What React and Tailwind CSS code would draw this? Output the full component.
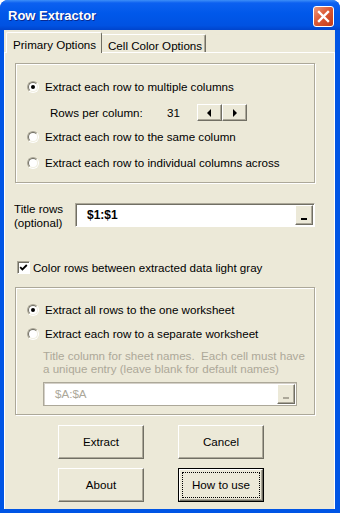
const font = "font-['Liberation_Sans',Arial,sans-serif]";

function Radio({ checked }) {
  return (
    <span className="flex w-[12px] h-[12px] shrink-0 rounded-full border border-t-[#ACA899] border-l-[#ACA899] border-b-white border-r-white">
      <span className="flex flex-1 items-center justify-center rounded-full border border-t-[#716F64] border-l-[#716F64] border-b-[#F1EFE2] border-r-[#F1EFE2] bg-white">
        {checked && <span className="w-[4px] h-[4px] rounded-full bg-black" />}
      </span>
    </span>
  );
}

function Check() {
  return (
    <span className="flex w-[13px] h-[13px] shrink-0 items-center justify-center border border-t-[#ACA899] border-l-[#ACA899] border-b-white border-r-white bg-white shadow-[inset_1px_1px_0_#716F64]">
      <svg width="9" height="9" viewBox="0 0 9 9">
        <path d="M1.2 4.2 L3.4 6.4 L7.8 2" fill="none" stroke="#000" strokeWidth="1.8" />
      </svg>
    </span>
  );
}

function Button({ children, focused }) {
  if (focused) {
    return (
      <div className="flex w-[86px] h-[34px] border border-black">
        <div className="flex flex-1 border border-t-white border-l-white border-b-[#716F64] border-r-[#716F64] shadow-[inset_-1px_-1px_0_#ACA899]">
          <div className="flex flex-1 m-[2px] items-center justify-center border border-dotted border-black text-black">
            {children}
          </div>
        </div>
      </div>
    );
  }
  return (
    <div className="flex w-[86px] h-[34px] items-center justify-center border border-t-white border-l-white border-b-[#716F64] border-r-[#716F64] shadow-[inset_-1px_-1px_0_#ACA899] text-black">
      {children}
    </div>
  );
}

function Spin({ dir }) {
  return (
    <div className="flex w-[25px] h-[17px] items-center justify-center border border-t-white border-l-white border-b-[#716F64] border-r-[#716F64] shadow-[inset_-1px_-1px_0_#ACA899]">
      <svg width="5" height="8" viewBox="0 0 5 8">
        {dir === 'left' ? <path d="M4 0 L0 4 L4 8 Z" fill="#000" /> : <path d="M1 0 L5 4 L1 8 Z" fill="#000" />}
      </svg>
    </div>
  );
}

function RefButton({ disabled }) {
  return (
    <div className="flex w-[18px] h-[20px] mr-[1px] items-end justify-center pb-[4px] border border-t-white border-l-white border-b-[#716F64] border-r-[#716F64] shadow-[inset_-1px_-1px_0_#ACA899] bg-[#ECE9D8]">
      <span className={disabled ? 'w-[6px] h-[2px] bg-[#ACA899]' : 'w-[6px] h-[2px] bg-black'} />
    </div>
  );
}

export default function App() {
  return (
    <div className={`${font} w-[340px] h-[513px] flex flex-col bg-[#0055E5] rounded-t-[8px] overflow-hidden text-[11.6px] text-black`}>
      {/* Title bar */}
      <div className="h-[30px] shrink-0 flex items-center justify-between pl-[8px] pr-[6px] bg-[linear-gradient(to_bottom,#3D8EF8_0%,#0C60F0_10%,#0058EA_45%,#0052E2_85%,#0044CC_100%)]">
        <span className="pt-[2px] text-[13px] font-bold text-white [text-shadow:1px_1px_0_#0A2A90]">Row Extractor</span>
        <div className="mt-[2px] flex w-[21px] h-[21px] items-center justify-center rounded-[3px] border border-white bg-[linear-gradient(135deg,#EC9A7C_0%,#DC5A36_45%,#C23A18_100%)]">
          <svg width="13" height="13" viewBox="0 0 13 13">
            <path d="M2 2 L11 11 M11 2 L2 11" stroke="#fff" strokeWidth="2.4" strokeLinecap="square" />
          </svg>
        </div>
      </div>

      {/* Client */}
      <div className="flex-1 flex flex-col ml-[4px] mr-[5px] mb-[4px] bg-[#ECE9D8]">
        {/* Tabs */}
        <div className="h-[22px] shrink-0 flex items-end pl-[2px]">
          <div className="relative z-10 -mb-[1px] flex w-[96px] h-[21px] items-start pt-[3px] pl-[6px] border-t border-l border-r border-t-white border-l-white border-r-[#716F64] rounded-t-[2px] bg-[#ECE9D8]">
            Primary Options
          </div>
          <div className="flex w-[104px] h-[18px] items-start pt-[2px] pl-[6px] border-t border-r border-t-white border-r-[#716F64] shadow-[inset_-1px_0_0_#ACA899] rounded-tr-[2px]">
            Cell Color Options
          </div>
        </div>

        {/* Panel */}
        <div className="flex-1 flex flex-col border-t border-l border-r border-white">
          {/* Group 1 */}
          <div className="mt-[10px] ml-[10px] w-[300px] flex flex-col pt-[15px] pb-[11px] pl-[11px] border border-[#ACA899] shadow-[inset_1px_1px_0_#fff,1px_1px_0_#fff]">
            <div className="h-[16px] flex items-center gap-[6px]">
              <Radio checked />
              <span>Extract each row to multiple columns</span>
            </div>
            <div className="mt-[9px] h-[17px] flex items-center pl-[23px]">
              <span className="w-[117px]">Rows per column:</span>
              <span className="w-[30px]">31</span>
              <Spin dir="left" />
              <Spin dir="right" />
            </div>
            <div className="mt-[8px] h-[16px] flex items-center gap-[6px]">
              <Radio />
              <span>Extract each row to the same column</span>
            </div>
            <div className="mt-[10px] h-[16px] flex items-center gap-[6px]">
              <Radio />
              <span>Extract each row to individual columns across</span>
            </div>
          </div>

          {/* Title rows */}
          <div className="mt-[20px] ml-[9px] h-[24px] flex items-start">
            <div className="w-[61px] -mt-[1px] leading-[14px]">
              <div>Title rows</div>
              <div>(optional)</div>
            </div>
            <div className="w-[240px] h-[24px] flex items-center justify-between bg-white border border-t-[#ACA899] border-l-[#ACA899] border-b-white border-r-white shadow-[inset_1px_1px_0_#716F64]">
              <span className="pl-[11px] text-[12px] font-bold">$1:$1</span>
              <RefButton />
            </div>
          </div>

          {/* Checkbox */}
          <div className="mt-[34px] ml-[12px] h-[13px] flex items-center gap-[3px]">
            <Check />
            <span>Color rows between extracted data light gray</span>
          </div>

          {/* Group 2 */}
          <div className="mt-[13px] ml-[10px] w-[300px] flex flex-col pt-[14px] pb-[8px] pl-[11px] border border-[#ACA899] shadow-[inset_1px_1px_0_#fff,1px_1px_0_#fff]">
            <div className="h-[16px] flex items-center gap-[6px]">
              <Radio checked />
              <span>Extract all rows to the one worksheet</span>
            </div>
            <div className="mt-[8px] h-[16px] flex items-center gap-[6px]">
              <Radio />
              <span>Extract each row to a separate worksheet</span>
            </div>
            <div className="mt-[7px] pl-[16px] leading-[13px] text-[#ACA899]">
              <div>Title column for sheet names.&nbsp; Each cell must have</div>
              <div>a unique entry (leave blank for default names)</div>
            </div>
            <div className="mt-[7px] ml-[16px] w-[254px] h-[24px] flex items-center justify-between bg-white border border-[#ACA899] shadow-[inset_1px_1px_0_#D4D0C8]">
              <span className="pl-[11px] text-[#ACA899]">$A:$A</span>
              <RefButton disabled />
            </div>
          </div>

          {/* Buttons */}
          <div className="mt-[10px] ml-[53px] flex gap-[34px]">
            <Button>Extract</Button>
            <Button>Cancel</Button>
          </div>
          <div className="mt-[9px] ml-[53px] flex gap-[34px]">
            <Button>About</Button>
            <Button focused>How to use</Button>
          </div>
        </div>
      </div>
    </div>
  );
}
